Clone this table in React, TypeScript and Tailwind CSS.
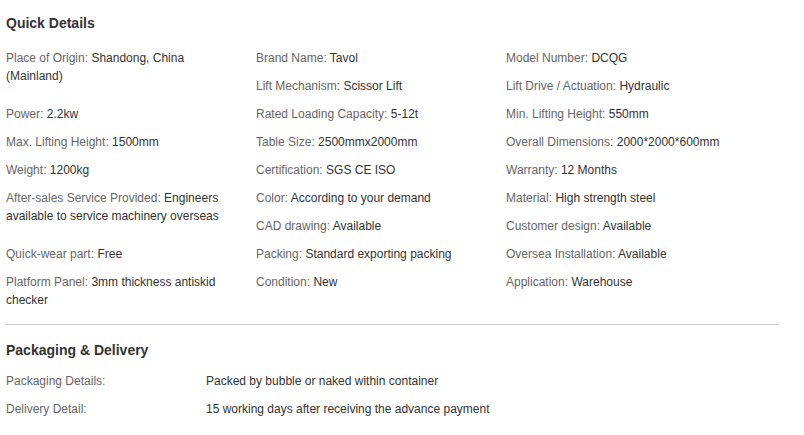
type Item = { label: string; value: string; tall?: boolean };

const COL1: Item[] = [
  { label: "Place of Origin", value: "Shandong, China (Mainland)", tall: true },
  { label: "Power", value: "2.2kw" },
  { label: "Max. Lifting Height", value: "1500mm" },
  { label: "Weight", value: "1200kg" },
  { label: "After-sales Service Provided", value: "Engineers available to service machinery overseas", tall: true },
  { label: "Quick-wear part", value: "Free" },
  { label: "Platform Panel", value: "3mm thickness antiskid checker" },
];

const COL2: Item[] = [
  { label: "Brand Name", value: "Tavol" },
  { label: "Lift Mechanism", value: "Scissor Lift" },
  { label: "Rated Loading Capacity", value: "5-12t" },
  { label: "Table Size", value: "2500mmx2000mm" },
  { label: "Certification", value: "SGS CE ISO" },
  { label: "Color", value: "According to your demand" },
  { label: "CAD drawing", value: "Available" },
  { label: "Packing", value: "Standard exporting packing" },
  { label: "Condition", value: "New" },
];

const COL3: Item[] = [
  { label: "Model Number", value: "DCQG" },
  { label: "Lift Drive / Actuation", value: "Hydraulic" },
  { label: "Min. Lifting Height", value: "550mm" },
  { label: "Overall Dimensions", value: "2000*2000*600mm" },
  { label: "Warranty", value: "12 Months" },
  { label: "Material", value: "High strength steel" },
  { label: "Customer design", value: "Available" },
  { label: "Oversea Installation", value: "Available" },
  { label: "Application", value: "Warehouse" },
];

const DELIVERY = [
  { label: "Packaging Details:", value: "Packed by bubble or naked within container" },
  { label: "Delivery Detail:", value: "15 working days after receiving the advance payment" },
];

function Column({ items }: { items: Item[] }) {
  return (
    <ul className="w-[250px] pr-[14px]">
      {items.map((it) => (
        <li key={it.label} className={it.tall ? "h-14" : "min-h-7"}>
          <span className="text-[#666]">{it.label}:</span>{" "}
          <span className="text-[#333]">{it.value}</span>
        </li>
      ))}
    </ul>
  );
}

export default function App() {
  return (
    <div
      className="w-[804px] h-[435px] bg-white pl-[6px] pt-[13px] text-[12px] leading-[18px]"
      style={{ fontFamily: '"Liberation Sans", Arial, sans-serif' }}
    >
      {/* Quick Details */}
      <h3 className="text-[14px] leading-[20px] font-bold text-[#333]">Quick Details</h3>
      <div className="mt-4 flex">
        <Column items={COL1} />
        <Column items={COL2} />
        <Column items={COL3} />
      </div>

      <div className="mt-[15px] w-[772px] h-px bg-[#ccc]" />

      {/* Packaging & Delivery */}
      <h3 className="mt-[15px] text-[14px] leading-[20px] font-bold text-[#333]">
        Packaging &amp; Delivery
      </h3>
      <div className="mt-[12px]">
        {DELIVERY.map((d) => (
          <div key={d.label} className="flex h-7">
            <span className="w-[200px] text-[#666]">{d.label}</span>
            <span className="text-[#333]">{d.value}</span>
          </div>
        ))}
      </div>
    </div>
  );
}
